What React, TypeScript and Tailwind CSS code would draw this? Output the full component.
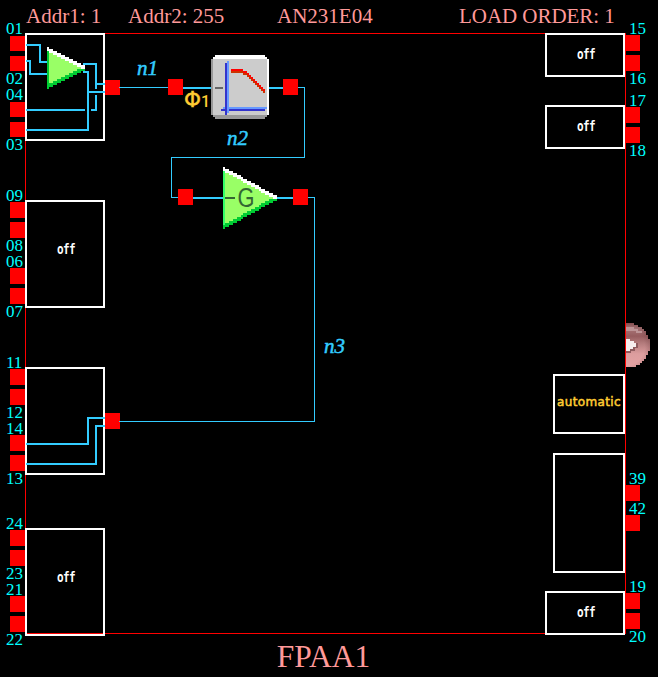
import React from "react";

type Block = { x: number; y: number; w: number; h: number; label?: string; accent?: boolean };
type Pin = { n: string; x: number; base: number };
type Pad = { x: number; y: number; w?: number; h?: number };

const blocks: Block[] = [
  { x: 25, y: 33, w: 80, h: 108 },
  { x: 25, y: 200, w: 80, h: 108, label: "off" },
  { x: 25, y: 367, w: 80, h: 108 },
  { x: 25, y: 528, w: 80, h: 108, label: "off" },
  { x: 545, y: 33, w: 80, h: 44, label: "off" },
  { x: 545, y: 105, w: 80, h: 44, label: "off" },
  { x: 553, y: 374, w: 72, h: 60, label: "automatic", accent: true },
  { x: 553, y: 453, w: 72, h: 120 },
  { x: 545, y: 591, w: 80, h: 44, label: "off" },
];

const pins: Pin[] = [
  ["01", 34], ["02", 84], ["04", 100], ["03", 150],
  ["09", 201], ["08", 251], ["06", 267], ["07", 317],
  ["11", 368], ["12", 418], ["14", 434], ["13", 484],
  ["24", 529], ["23", 579], ["21", 595], ["22", 645],
].map(([n, base]) => ({ n: n as string, x: 6, base: base as number }));

const rightPins: Pin[] = [
  ["15", 34], ["16", 84], ["17", 106], ["18", 156],
  ["39", 484], ["42", 514], ["19", 592], ["20", 642],
].map(([n, base]) => ({ n: n as string, x: 629, base: base as number }));

const pads: Pad[] = [
  ...[36, 56, 102, 122].map((y) => ({ x: 10, y, h: 15 })),
  ...[202, 222, 268, 288, 369, 389, 435, 455, 530, 550, 596, 616].map((y) => ({ x: 10, y })),
  ...[35, 55, 107, 127, 485, 515, 593, 613].map((y) => ({ x: 626, y, w: 14 })),
  { x: 105, y: 80, h: 15 },
  { x: 168, y: 79 },
  { x: 283, y: 79 },
  { x: 178, y: 189 },
  { x: 293, y: 189 },
  { x: 105, y: 413 },
];

const nets = [
  { n: "n1", x: 137, base: 75 },
  { n: "n2", x: 227, base: 145 },
  { n: "n3", x: 324, base: 353 },
];

/** Triangular amplifier symbol built from two-pixel cells. */
function Amp({ x, y, cols, mid, edge }: { x: number; y: number; cols: number; mid: number; edge: string }) {
  const cells: React.ReactElement[] = [];
  for (let c = 0; c < cols; c++) {
    const r = Math.min(mid - 1, Math.round((c * (mid - 0.5)) / (cols - 1)));
    const X = x + c * 2;
    const put = (k: string, row: number, n: number, fill: string) =>
      cells.push(<rect key={k + c} x={X} y={y + row * 2} width={2} height={n * 2} fill={fill} />);
    put("m", r, 2 * (mid - r) + 1, c === 0 ? edge : "#99ff66");
    put("b", 2 * mid - r - 1, 2, "#00cc33");
    put("t", r, 2, "#ffffff");
  }
  return <g>{cells}</g>;
}

function FilterIcon() {
  const steps = Array.from({ length: 10 }, (_, i) => i);
  return (
    <g>
      <path d="M215 55h50v2h2v2h2v56h-2V59h-54v-2h2z" fill="#fff" />
      <path d="M211 59h2v56h54v2h-2v2h-50v-2h-2v-2h-2z" fill="#999" />
      <rect x={213} y={59} width={54} height={56} fill="#ccc" />
      <rect x={221} y={109} width={44} height={2} fill="#3333cc" />
      <rect x={223} y={107} width={44} height={2} fill="#6699ff" />
      <rect x={225} y={63} width={2} height={52} fill="#3333cc" />
      <rect x={227} y={61} width={2} height={52} fill="#6699ff" />
      <rect x={215} y={87} width={8} height={2} fill="#666" />
      <rect x={231} y={69} width={12} height={2} fill="#f00" />
      <rect x={231} y={71} width={12} height={2} fill="#cc3300" />
      <rect x={243} y={71} width={4} height={2} fill="#f00" />
      <rect x={243} y={73} width={2} height={2} fill="#cc3300" />
      {steps.map((i) => (
        <g key={i}>
          <rect x={245 + 2 * i} y={71 + 2 * i} width={2} height={2} fill="#f00" />
          <rect x={245 + 2 * i} y={73 + 2 * i} width={2} height={2} fill="#cc3300" />
        </g>
      ))}
    </g>
  );
}

function Ball() {
  const disc = "M626 323h8v2h4v2h4v2h2v2h2v4h2v4h2v12h-2v4h-2v4h-2v2h-2v2h-2v2h-4v2h-10z";
  return (
    <g>
      <defs>
        <linearGradient id="ball" x1="0" y1="0" x2="0" y2="1">
          <stop offset="0" stopColor="#8c5557" />
          <stop offset="0.12" stopColor="#a87678" />
          <stop offset="0.3" stopColor="#965c5e" />
          <stop offset="0.45" stopColor="#b27a7b" />
          <stop offset="0.7" stopColor="#dc9d9e" />
          <stop offset="1" stopColor="#e5a3a4" />
        </linearGradient>
        <radialGradient id="rim" cx="626" cy="347" r="25" gradientUnits="userSpaceOnUse">
          <stop offset="0.75" stopColor="#6d3b3e" stopOpacity="0" />
          <stop offset="1" stopColor="#6d3b3e" stopOpacity="0.3" />
        </radialGradient>
      </defs>
      <path d={disc} fill="url(#ball)" />
      <path d={disc} fill="url(#rim)" />
      <path d="M626 327h8v2h4v2h4v2h-6v-2h-10z" fill="#bd9496" />
      <path d="M626 349h6v-2h4v-4h2v5h-3v3h-4v2h-5z" fill="#8e5b5e" />
      <path d="M626 339h4v2h4v2h2v4h-3v2h-3v2h-4z" fill="#f6eeee" />
    </g>
  );
}

export default function App() {
  return (
    <main className="relative flex h-[677px] w-[658px] flex-col justify-between overflow-hidden bg-black font-['Liberation_Serif',serif] text-[#ff9999]">
      <header className="flex h-8 items-start whitespace-pre pt-[4px] pl-[26px] text-[21px] leading-6">
        <span className="w-[102px]">Addr1: 1</span>
        <span className="w-[149px]">Addr2: 255</span>
        <span className="w-[182px]">AN231E04</span>
        <span className="tracking-[-0.05px]">LOAD ORDER: 1</span>
      </header>
      <footer className="h-[38px] pr-[11px] text-center text-[31.5px] leading-9">FPAA1</footer>

      <div className="absolute top-[33px] left-[25px] h-[601px] w-[601px] border border-[#ff0000]" />

      {blocks.map((b, i) => (
        <div
          key={i}
          className="absolute flex items-center justify-center border-2 border-white"
          style={{ left: b.x, top: b.y, width: b.w, height: b.h }}
        >
          {b.label && !b.accent && (
            <span
              className={`ml-[2px] scale-y-[1.35] font-['DejaVu_Sans_Mono',monospace] text-[11px] leading-none font-bold tracking-[-0.6px] text-white ${
                b.h > 60 ? "mb-[9px]" : "mb-[2px]"
              }`}
            >
              {b.label}
            </span>
          )}
          {b.accent && (
            <span className="mb-[5px] font-['DejaVu_Sans',sans-serif] text-[12px] leading-none tracking-[0.35px] text-[#ffcc33] [-webkit-text-stroke:0.5px_#ffcc33]">
              {b.label}
            </span>
          )}
        </div>
      ))}

      {pads.map((p, i) => (
        <div key={i} className="absolute bg-[#ff0000]" style={{ left: p.x, top: p.y, width: p.w ?? 15, height: p.h ?? 16 }} />
      ))}

      {[...pins, ...rightPins].map((p) => (
        <span key={p.n} className="absolute text-[17px] leading-4 text-[#00ffff]" style={{ left: p.x, top: p.base - 13 }}>
          {p.n}
        </span>
      ))}

      {nets.map((n) => (
        <span
          key={n.n}
          className="absolute text-[21px] leading-6 text-[#33ccff] italic [-webkit-text-stroke:0.5px_#33ccff]"
          style={{ left: n.x, top: n.base - 19 }}
        >
          {n.n}
        </span>
      ))}

      <svg className="absolute top-0 left-0" width="658" height="677" viewBox="0 0 658 677" shapeRendering="crispEdges">
        <g fill="none" stroke="#33ccff" strokeWidth={1}>
          <path d="M119 87.5H168M298 87.5H304.5V157.5H171.5V197.5H178M308 197.5H314.5V421.5H119" />
        </g>
        <g fill="none" stroke="#33ccff" strokeWidth={2}>
          <path d="M183 88H211M269 88H283M193 198H223M277 198H293" />
          <path d="M26 45H40V62H47M26 61H30V74H47" />
          <path d="M83 64H96V84H105M96 84V89M83 72H88V130H26M88 92H105M26 110H85M91 110H96V95" />
          <path d="M26 444H88V418H105M26 464H96V426H105" />
        </g>
        <Amp x={47} y={47} cols={19} mid={10} edge="#00cc33" />
        <Amp x={223} y={167} cols={27} mid={15} edge="#33ff66" />
        <rect x={225} y={197} width={10} height={2} fill="#336633" />
        <text x={237.5} y={207} textLength={17} lengthAdjust="spacingAndGlyphs" className="fill-[#336633] font-['Liberation_Sans',sans-serif] text-[27px]">
          G
        </text>
        <FilterIcon />
        <text
          x={184}
          y={107}
          textLength={17}
          lengthAdjust="spacingAndGlyphs"
          className="fill-[#ffcc33] stroke-[#ffcc33] stroke-[0.4px] font-['DejaVu_Sans',sans-serif] text-[22px]"
        >
          Φ
        </text>
        <text x={201} y={107} className="fill-[#ffcc33] font-['Roboto',sans-serif] text-[16px] font-medium">
          1
        </text>
        <Ball />
      </svg>
    </main>
  );
}
